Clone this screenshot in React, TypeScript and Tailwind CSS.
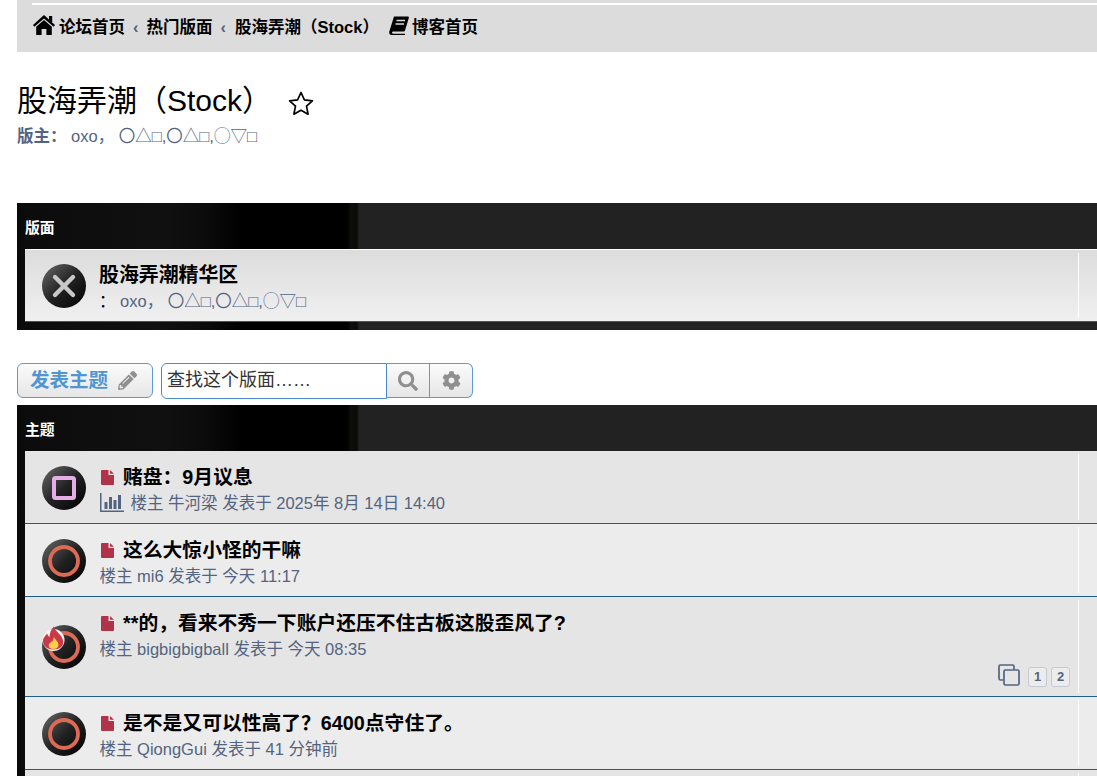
import { FaCog, FaPencilAlt, FaSearch } from "react-icons/fa";

const FONT = "font-['Liberation_Sans','Noto_Sans_CJK_SC',sans-serif]";
const PANEL_BG =
  "bg-[linear-gradient(90deg,#0a0a0a_0px,#0c0c0c_8px,#101010_150px,#0b0b0b_190px,#000_225px,#000_330px,#0e0e0b_334px,#0a0a08_340px,#222_342px)]";
const BTN_BG = "bg-[linear-gradient(180deg,#fbfbfb,#e6e6e6)]";

interface Topic {
  title: string;
  author: string;
  time: string;
  ring: "square" | "circle";
  chart?: boolean;
  hot?: boolean;
  pages?: number[];
  bg: string;
}

const topics: Topic[] = [
  { title: "赌盘：9月议息", author: "牛河梁", time: "2025年 8月 14日 14:40", ring: "square", chart: true, bg: "bg-[#e5e5e5]" },
  { title: "这么大惊小怪的干嘛", author: "mi6", time: "今天 11:17", ring: "circle", bg: "bg-[#ececec]" },
  { title: "**的，看来不秀一下账户还压不住古板这股歪风了?", author: "bigbigbigball", time: "今天 08:35", ring: "circle", hot: true, pages: [1, 2], bg: "bg-[#e5e5e5]" },
  { title: "是不是又可以性高了？6400点守住了。", author: "QiongGui", time: "41 分钟前", ring: "circle", bg: "bg-[#ececec]" },
];

function StatusIcon({ kind, gradId }: { kind: "square" | "circle" | "x"; gradId: string }) {
  return (
    <svg width="44" height="44" viewBox="0 0 44 44" className="shrink-0">
      <defs>
        <linearGradient id={gradId} x1="0" y1="0" x2="1" y2="1">
          <stop offset="0" stopColor="#6a6a6a" />
          <stop offset="0.5" stopColor="#222" />
          <stop offset="1" stopColor="#000" />
        </linearGradient>
      </defs>
      <circle cx="22" cy="22" r="22" fill={`url(#${gradId})`} />
      {kind === "square" && <rect x="12" y="12" width="20" height="20" rx="1.5" fill="none" stroke="#e6aee6" strokeWidth="4" />}
      {kind === "circle" && <circle cx="22" cy="22" r="14" fill="none" stroke="#dc6a54" strokeWidth="3.8" />}
      {kind === "x" && <path d="M13 13 L31 31 M31 13 L13 31" stroke="#c8c8c8" strokeWidth="4.4" strokeLinecap="round" />}
    </svg>
  );
}

function HomeIcon() {
  return (
    <svg width="22" height="20" viewBox="0 0 22 20" className="mr-[4px] shrink-0 -translate-y-[2px]" fill="#000">
      <path d="M11 0 L22 10 L20.6 11.8 L11 3.4 L1.4 11.8 L0 10 Z" />
      <path d="M3.2 11.8 L11 5 L18.8 11.8 V20 H13.4 V14 H8.6 V20 H3.2 Z" />
      <rect x="16" y="1" width="3.2" height="6" />
    </svg>
  );
}

function BookIcon() {
  return (
    <svg width="20" height="19" viewBox="0 0 20 19" className="ml-[10px] mr-[3px] shrink-0 -translate-y-[1px]">
      <path d="M5 0.5 H19 Q20.2 0.5 19.8 2 L16 14.5 Q15.7 15.5 14.5 15.5 H4.5 Q3 15.5 3 16.7 Q3 17.8 4.5 17.8 H16 V19 H3 Q-0.3 19 0.3 15.5 Z" fill="#000" />
      <path d="M7.5 4.5 H16 M6.5 8 H15" stroke="#dcdcdc" strokeWidth="1.3" />
    </svg>
  );
}

function StarIcon() {
  return (
    <svg width="26" height="25" viewBox="0 0 26 25" className="ml-[16px] mt-[4px] shrink-0" fill="none" stroke="#000" strokeWidth="1.7" strokeLinejoin="round">
      <path d="M13 1.5 L16.4 8.8 L24.4 9.8 L18.5 15.2 L20.1 23.2 L13 19.2 L5.9 23.2 L7.5 15.2 L1.6 9.8 L9.6 8.8 Z" />
    </svg>
  );
}

function FileIcon() {
  return (
    <svg width="13" height="15" viewBox="0 0 13 15" className="shrink-0">
      <path d="M0 1 Q0 0 1 0 H7.5 V4.5 Q7.5 5 8 5 H13 V14 Q13 15 12 15 H1 Q0 15 0 14 Z" fill="#b0334a" />
      <path d="M9 0 L13 3.8 H9 Z" fill="#b0334a" />
    </svg>
  );
}

function ChartIcon() {
  return (
    <svg width="24" height="19" viewBox="0 0 24 19" className="shrink-0 -translate-y-[1px]" fill="#536482">
      <rect x="0" y="0" width="1.5" height="19" />
      <rect x="0" y="17.5" width="24" height="1.5" />
      <rect x="4.5" y="9" width="3" height="7" />
      <rect x="9" y="4" width="3" height="12" />
      <rect x="13.5" y="7" width="3" height="9" />
      <rect x="18" y="2" width="3" height="14" />
    </svg>
  );
}

function PagesIcon() {
  return (
    <svg width="22" height="22" viewBox="0 0 22 22" className="shrink-0" fill="none" stroke="#536482" strokeWidth="1.7">
      <path d="M5.5 16 H2.5 Q1 16 1 14.5 V2.5 Q1 1 2.5 1 H14.5 Q16 1 16 2.5 V5.5" />
      <rect x="6" y="6" width="15" height="15" rx="1.5" />
    </svg>
  );
}

function Flame() {
  return (
    <svg width="23" height="26" viewBox="0 0 23 26" className="absolute left-0 top-[1px]">
      <circle cx="11.5" cy="14" r="11" fill="#f2f2f2" />
      <path d="M12 0.5 C13 5.5 20 8.5 21 14.5 C22 20.5 17.5 23.5 11.5 23.5 C5.5 23.5 1 20.5 1 15 C1 11.5 3.5 10 5 7.5 C6 9.5 6.5 10.5 7.5 11 C7.5 7.5 9 3.5 12 0.5 Z" fill="#c9394a" />
      <path d="M12 11 C13 14 17 16 16.5 19.5 C16 22 14 23 11.5 23 C8.5 23 6.5 21.5 6.7 19 C6.9 17.5 8.5 17 9.5 15.5 C10.5 16 11.5 14 12 11 Z" fill="#fbcf46" />
    </svg>
  );
}

function RowDivider() {
  return <div className="my-[3px] ml-auto w-[19px] shrink-0 self-stretch border-l border-white" />;
}

function TopicRow({ topic, index }: { topic: Topic; index: number }) {
  return (
    <div className={`relative flex border-b border-[#1f5f8f] ${topic.bg} ${topic.pages ? "h-[100px]" : "h-[73px]"}`}>
      <div className={`relative ml-[17px] h-[44px] w-[44px] shrink-0 ${topic.pages ? "mt-[28px]" : "mt-[15px]"}`}>
        <StatusIcon kind={topic.ring} gradId={`topic-grad-${index}`} />
        {topic.hot && <Flame />}
      </div>
      <div className="ml-[13.5px] mt-[13px] min-w-0 flex-1">
        <div className="flex items-center gap-[9px] pl-[1.5px]">
          <FileIcon />
          <span className="text-[19.8px] font-bold leading-[26px] text-black">{topic.title}</span>
        </div>
        <div className="flex items-center gap-[7px] text-[16.5px] leading-[26px] text-[#536482]">
          {topic.chart && <ChartIcon />}
          <span>
            楼主 {topic.author} 发表于 {topic.time}
          </span>
        </div>
      </div>
      {topic.pages && (
        <div className="absolute bottom-[7px] right-[27px] flex items-center gap-[4px]">
          <div className="mb-[3px] mr-[4px]">
            <PagesIcon />
          </div>
          {topic.pages.map((p) => (
            <span key={p} className="flex h-[20px] w-[19px] items-center justify-center rounded-[3px] border border-[#c4c9d2] bg-[#ececec] text-[13px] font-bold text-[#536482]">
              {p}
            </span>
          ))}
        </div>
      )}
      <RowDivider />
    </div>
  );
}

function Mods() {
  return <span className="text-[#536482]">oxo， 〇△□,〇△□,◯▽□</span>;
}

export default function App() {
  return (
    <div className={`${FONT} h-[776px] w-[1097px] overflow-hidden bg-white pl-[17px] text-black`}>
      {/* Breadcrumbs */}
      <div className="h-[52px] bg-[#dcdcdc] pl-[15px] pt-[3px]">
        <div className="h-[1.5px] bg-white" />
        <div className="mt-[10px] flex items-center pl-[1px] text-[16.5px] font-bold leading-[24px]">
          <HomeIcon />
          <span>论坛首页</span>
          <span className="mx-[8px] text-[#536482]">‹</span>
          <span>热门版面</span>
          <span className="ml-[8px] mr-[9px] text-[#536482]">‹</span>
          <span>股海弄潮（Stock）</span>
          <BookIcon />
          <span>博客首页</span>
        </div>
      </div>

      {/* Forum title */}
      <div className="mt-[29px] flex items-center">
        <h1 className="text-[30px] font-normal leading-[40px]">股海弄潮（Stock）</h1>
        <StarIcon />
      </div>
      <div className="mt-[3px] text-[16.5px] leading-[24px]">
        <span className="font-bold text-[#536482]">版主：</span> <Mods />
      </div>

      {/* Subforum panel */}
      <div className={`mt-[55px] h-[127px] ${PANEL_BG} pl-[8px]`}>
        <div className="h-[46px] pt-[15px] text-[14.85px] font-bold leading-[20px] text-white">版面</div>
        <div className="flex h-[73px] border-b border-t border-b-[#1f5f8f] border-t-white bg-[linear-gradient(180deg,#dcdcdc,#f0f0f0)]">
          <div className="ml-[17px] mt-[14px]">
            <StatusIcon kind="x" gradId="forum-grad" />
          </div>
          <div className="ml-[13px] mt-[12px]">
            <div className="text-[19.9px] font-bold leading-[27px]">股海弄潮精华区</div>
            <div className="text-[16.5px] leading-[24px]">
              ： <Mods />
            </div>
          </div>
          <RowDivider />
        </div>
      </div>

      {/* Action bar */}
      <div className="mt-[33px] flex h-[36px] items-start">
        <button className={`flex h-[35px] w-[136px] items-center gap-[10px] rounded-[6px] border border-[#5c9bd1] pl-[12px] text-[19.5px] font-bold text-[#5095d4] ${BTN_BG}`}>
          发表主题
          <FaPencilAlt className="h-[19px] w-[19px] text-[#8f8f8f]" />
        </button>
        <div className="ml-[8px] flex h-[36px]">
          <div className="flex w-[226px] items-center rounded-l-[6px] border border-[#4a8ccb] pb-[1px] pl-[5px] text-[18px] text-[#333]">查找这个版面……</div>
          <div className={`flex h-[35px] w-[43px] items-center justify-center border-y border-r border-[#5c9bd1] ${BTN_BG}`}>
            <FaSearch className="h-[20px] w-[20px] text-[#8f8f8f]" />
          </div>
          <div className={`flex h-[35px] w-[43px] items-center justify-center rounded-r-[6px] border-y border-r border-[#5c9bd1] ${BTN_BG}`}>
            <FaCog className="h-[19px] w-[19px] text-[#8f8f8f]" />
          </div>
        </div>
      </div>

      {/* Topics panel */}
      <div className={`mt-[6px] ${PANEL_BG} pb-[20px] pl-[8px]`}>
        <div className="h-[46px] pt-[15px] text-[14.85px] font-bold leading-[20px] text-white">主题</div>
        {topics.map((t, i) => (
          <TopicRow key={t.title} topic={t} index={i} />
        ))}
        <div className="flex h-[73px] bg-[#e5e5e5]">
          <RowDivider />
        </div>
      </div>
    </div>
  );
}
